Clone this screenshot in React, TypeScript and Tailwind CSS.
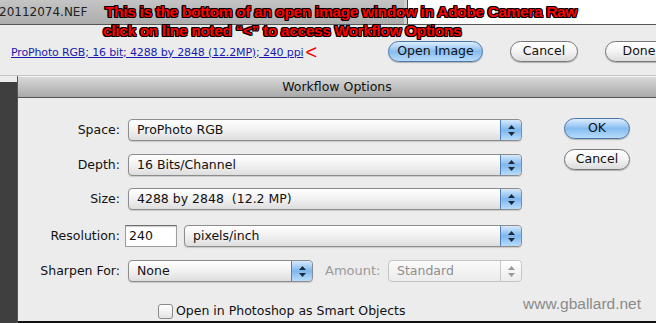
import React from "react";

const UI = "font-['DejaVu_Sans','Liberation_Sans',sans-serif]";

function Stepper({ disabled }: { disabled?: boolean }) {
  return (
    <div
      className={
        "flex h-full w-[21px] flex-col items-center justify-center gap-[3px] rounded-r-[4px] border-l " +
        (disabled
          ? "border-[#c8c8c8] bg-gradient-to-b from-white to-[#ececec]"
          : "border-[#4f7fb8] bg-gradient-to-b from-[#d6eafc] via-[#7db6ee] to-[#b9ddfb]")
      }
    >
      <svg width="7" height="4" viewBox="0 0 7 4">
        <path d="M3.5 0L7 4H0Z" fill={disabled ? "#9a9a9a" : "#1c2a3a"} />
      </svg>
      <svg width="7" height="4" viewBox="0 0 7 4">
        <path d="M0 0H7L3.5 4Z" fill={disabled ? "#9a9a9a" : "#1c2a3a"} />
      </svg>
    </div>
  );
}

function Select({ w, text, disabled }: { w: string; text: string; disabled?: boolean }) {
  return (
    <div
      className={
        "flex h-[22px] items-stretch overflow-hidden rounded-[4px] border " +
        w +
        " " +
        (disabled
          ? "border-[#c4c4c4] bg-gradient-to-b from-[#fafafa] to-[#ececec]"
          : "border-[#8c8c8c] bg-gradient-to-b from-white via-[#f1f1f1] to-[#dedede] shadow-[0_1px_1px_rgba(0,0,0,0.15)]")
      }
    >
      <div
        className={
          "flex flex-1 items-center whitespace-pre pl-[8px] text-[12.5px] leading-none " +
          (disabled ? "text-[#8e8e8e]" : "text-[#111]")
        }
      >
        {text}
      </div>
      <Stepper disabled={disabled} />
    </div>
  );
}

function Label({ children }: { children: React.ReactNode }) {
  return <div className="w-[102px] shrink-0 text-right text-[12.5px] text-[#111]">{children}</div>;
}

function AquaButton({ children, blue, w }: { children: React.ReactNode; blue?: boolean; w: string }) {
  return (
    <div
      className={
        "flex h-[21px] items-center justify-center rounded-full border text-[12.5px] text-[#111] " +
        w +
        " " +
        (blue
          ? "border-[#4c76a6] bg-gradient-to-b from-[#dcedfd] via-[#86bdf0] to-[#b6dcfb] shadow-[0_1px_1px_rgba(0,0,0,0.25)]"
          : "border-[#777] bg-gradient-to-b from-white via-[#f3f3f3] to-[#dcdcdc] shadow-[0_1px_1px_rgba(0,0,0,0.25)]")
      }
    >
      {children}
    </div>
  );
}

export default function App() {
  return (
    <div className={"relative h-[323px] w-[656px] overflow-hidden bg-[#ececec] " + UI}>
      {/* top file header */}
      <div className="flex h-[25px] border-b border-[#555]">
        <div className="flex w-[404px] items-center bg-gradient-to-b from-[#c4c4c4] to-[#adadad] text-[12px] text-[#222]">
          <span className="ml-[-1px]">20112074.NEF</span>
        </div>
        <div className="w-[3px] bg-[#cfcfcf]" />
        <div className="w-px bg-[#444]" />
        <div className="flex-1 bg-white" />
      </div>

      {/* link + buttons row */}
      <div className="flex h-[51px] items-start border-b border-[#c4c4c4]">
        <div className="mt-[19px] ml-[11px] flex items-center">
          <span className="text-[11px] tracking-[-0.15px] text-[#1a1ab0] underline">
            ProPhoto RGB; 16 bit; 4288 by 2848 (12.2MP); 240 ppi
          </span>
          <span className="ml-[2px] mt-[-2px] font-['Liberation_Sans',sans-serif] text-[20px] leading-none text-[#f00]">
            &lt;
          </span>
        </div>
        <div className="ml-auto mt-[16px] flex gap-[27px]">
          <AquaButton blue w="w-[95px]">Open Image</AquaButton>
          <AquaButton w="w-[68px]">Cancel</AquaButton>
          <AquaButton w="w-[68px] mr-[-17px]">Done</AquaButton>
        </div>
      </div>

      {/* dialog */}
      <div className="flex h-[247px]">
        <div className="flex w-[17px] flex-col">
          <div className="h-[6px] bg-[#ececec]" />
          <div className="flex-1 bg-[#3f3f3f]" />
        </div>
        <div className="flex flex-1 flex-col border-l border-[#555]">
          <div className="flex h-[22px] items-center justify-center border-b border-[#555] border-t border-t-[#f4f4f4] bg-gradient-to-b from-[#d9d9d9] to-[#a9a9a9] text-[12.5px] text-[#111]">
            Workflow Options
          </div>
          <div className="flex flex-1 border-b-2 border-[#111]">
            <div className="flex w-[529px] flex-col pt-[21px]">
              <div className="flex items-center gap-[8px]">
                <Label>Space:</Label>
                <Select w="w-[394px]" text="ProPhoto RGB" />
              </div>
              <div className="mt-[13px] flex items-center gap-[8px]">
                <Label>Depth:</Label>
                <Select w="w-[394px]" text="16 Bits/Channel" />
              </div>
              <div className="mt-[12px] flex items-center gap-[8px]">
                <Label>Size:</Label>
                <Select w="w-[394px]" text="4288 by 2848  (12.2 MP)" />
              </div>
              <div className="mt-[15px] flex items-center">
                <Label>Resolution:</Label>
                <div className="ml-[5px] flex h-[22px] w-[52px] items-center border border-[#9c9c9c] border-t-[#6f6f6f] bg-white pl-[3px] text-[12.5px] text-[#111] shadow-[inset_0_1px_1px_rgba(0,0,0,0.2)]">
                  240
                </div>
                <div className="ml-[7px]">
                  <Select w="w-[338px]" text="pixels/inch" />
                </div>
              </div>
              <div className="mt-[13px] flex items-center">
                <Label>Sharpen For:</Label>
                <div className="ml-[8px]">
                  <Select w="w-[185px]" text="None" />
                </div>
                <div className="ml-[12px] w-[60px] text-[13px] text-[#9a9a9a]">Amount:</div>
                <div className="ml-[3px]">
                  <Select disabled w="w-[134px]" text="Standard" />
                </div>
              </div>
              <div className="mt-[20px] flex items-center pl-[140px]">
                <div className="h-[15px] w-[15px] rounded-[3px] border border-[#8a8a8a] bg-gradient-to-b from-white to-[#e4e4e4]" />
                <span className="ml-[3px] text-[12.5px] text-[#111]">Open in Photoshop as Smart Objects</span>
              </div>
            </div>
            <div className="flex flex-1 flex-col pt-[20px]">
              <div className="ml-[17px] flex flex-col gap-[10px]">
                <AquaButton blue w="w-[66px]">OK</AquaButton>
                <AquaButton w="w-[66px]">Cancel</AquaButton>
              </div>
              <div className="mt-auto mb-[6px] ml-[-24px] font-['Liberation_Sans',sans-serif] text-[15.5px] text-[#8a8a8a]">
                www.gballard.net
              </div>
            </div>
          </div>
        </div>
      </div>

      {/* annotation overlay */}
      <div className="absolute left-[103px] top-[2px] font-['Liberation_Sans',sans-serif] text-[15.5px] font-bold leading-[19px] tracking-[-0.35px] text-[#f00] [text-shadow:1px_0_0_#000,-1px_0_0_#000,0_1px_0_#000,0_-1px_0_#000,1px_1px_0_#000,-1px_-1px_0_#000,1px_-1px_0_#000,-1px_1px_0_#000]">
        <div className="ml-[2px]">This is the bottom of an open image window in Adobe Camera Raw</div>
        <div>click on line noted “&lt;” to access Workflow Options</div>
      </div>
    </div>
  );
}
